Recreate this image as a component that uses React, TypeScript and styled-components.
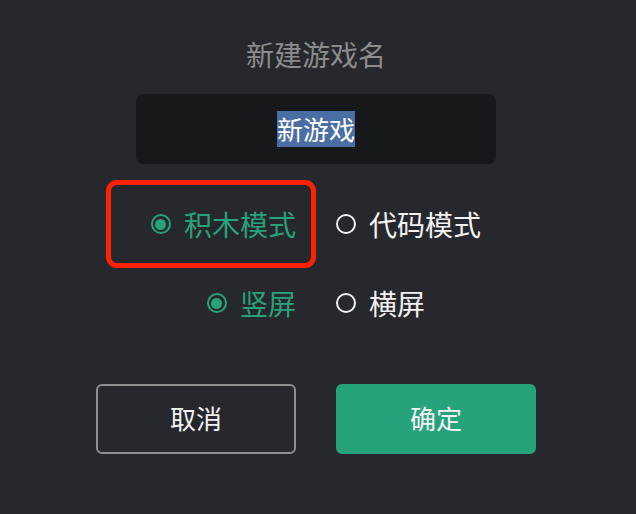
import React from 'react';
import styled, { createGlobalStyle } from 'styled-components';

const colors = {
  page: '#27282d',
  field: '#17181c',
  title: '#8c8c8e',
  text: '#f2f2f2',
  green: '#27a37b',
  border: '#8e8e90',
  select: '#4a6ea3',
  mark: '#ff2200'
};

const GlobalStyle = createGlobalStyle`
  html, body {
    margin: 0;
    padding: 0;
    background: ${colors.page};
  }
  body {
    font-family: "Noto Sans CJK SC", "Noto Sans", sans-serif;
  }
`;

const Dialog = styled.div`
  width: 632px;
  height: 514px;
  display: flex;
  flex-direction: column;
  align-items: center;
  box-sizing: border-box;
  padding-top: 34px;
`;

const Title = styled.h2`
  color: ${colors.title};
  font-size: 28px;
  font-weight: 400;
  line-height: 40px;
  margin: 0 0 20px;
`;

const NameField = styled.div`
  width: 360px;
  height: 70px;
  border-radius: 8px;
  background: ${colors.field};
  display: flex;
  align-items: center;
  justify-content: center;
  color: ${colors.text};
  font-size: 26px;
  line-height: 36px;
`;

const Selected = styled.span`
  background: ${colors.select};
  color: #ffffff;
`;

const Options = styled.div`
  display: grid;
  grid-template-columns: 1fr 1fr;
  column-gap: 40px;
  row-gap: 39px;
  width: 100%;
  margin-top: 40px;
`;

const Option = styled.div<{ $align: 'left' | 'right'; $checked?: boolean; $marked?: boolean }>`
  position: relative;
  justify-self: ${p => (p.$align === 'right' ? 'end' : 'start')};
  display: flex;
  align-items: center;
  gap: 13px;
  height: 40px;
  font-size: 28px;
  color: ${p => (p.$checked ? colors.green : colors.text)};

  ${p =>
    p.$marked &&
    `
    &::after {
      content: '';
      position: absolute;
      top: -24px;
      bottom: -24px;
      left: -45px;
      right: -20px;
      border: 5px solid ${colors.mark};
      border-radius: 11px;
    }
  `}
`;

const Radio = styled.span<{ $checked?: boolean }>`
  width: 20px;
  height: 20px;
  box-sizing: border-box;
  border-radius: 50%;
  border: 2px solid ${p => (p.$checked ? colors.green : colors.text)};
  display: flex;
  align-items: center;
  justify-content: center;

  &::before {
    content: '';
    width: 11px;
    height: 11px;
    border-radius: 50%;
    background: ${p => (p.$checked ? colors.green : 'transparent')};
  }
`;

const ButtonRow = styled.div`
  display: flex;
  gap: 40px;
  margin-top: 61px;
`;

const Button = styled.button<{ $primary?: boolean }>`
  width: 200px;
  height: 70px;
  box-sizing: border-box;
  border-radius: 6px;
  border: 2px solid ${p => (p.$primary ? colors.green : colors.border)};
  background: ${p => (p.$primary ? colors.green : 'transparent')};
  color: ${colors.text};
  font-family: inherit;
  font-size: 26px;
  line-height: 1;
  padding: 0 0 3px;
  cursor: pointer;
`;

const App: React.FC = () => {
  return (
    <>
      <GlobalStyle />
      <Dialog>
        <Title>新建游戏名</Title>
        <NameField>
          <Selected>新游戏</Selected>
        </NameField>
        <Options>
          <Option $align="right" $checked $marked>
            <Radio $checked />
            积木模式
          </Option>
          <Option $align="left">
            <Radio />
            代码模式
          </Option>
          <Option $align="right" $checked>
            <Radio $checked />
            竖屏
          </Option>
          <Option $align="left">
            <Radio />
            横屏
          </Option>
        </Options>
        <ButtonRow>
          <Button>取消</Button>
          <Button $primary>确定</Button>
        </ButtonRow>
      </Dialog>
    </>
  );
};

export default App;
